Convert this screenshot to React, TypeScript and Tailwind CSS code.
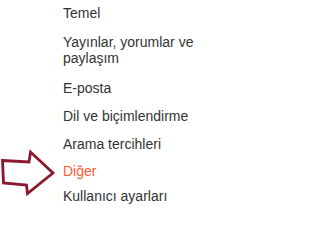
const items = [
  { label: "Temel", cls: "" },
  { label: "Yayınlar, yorumlar ve paylaşım", cls: "mt-[13px]" },
  { label: "E-posta", cls: "mt-[14px]" },
  { label: "Dil ve biçimlendirme", cls: "mt-[12px]" },
  { label: "Arama tercihleri", cls: "mt-[12px]" },
  { label: "Diğer", cls: "mt-[11px] text-[#ff5c35]" },
  { label: "Kullanıcı ayarları", cls: "mt-[9px]" },
];

export default function App() {
  return (
    <div className="relative w-[215px] h-[216px] bg-white overflow-hidden font-['Liberation_Sans',Arial,sans-serif]">
      {/* Menü */}
      <ul className="pl-[63px] pt-[5px] w-[208px] text-[14px] leading-[16px] text-[#333333]">
        {items.map((item) => (
          <li key={item.label} className={item.cls}>
            {item.label}
          </li>
        ))}
      </ul>

      {/* İşaret oku */}
      <svg
        className="absolute left-0 top-0 pointer-events-none"
        width="215"
        height="216"
        viewBox="0 0 215 216"
      >
        <polygon
          points="2.5,160.5 29,162 30.5,152 53,173 27.5,193.5 26.5,185 3.5,183"
          fill="white"
          stroke="#8b1a2e"
          strokeWidth="2.8"
          strokeLinejoin="miter"
        />
      </svg>
    </div>
  );
}
